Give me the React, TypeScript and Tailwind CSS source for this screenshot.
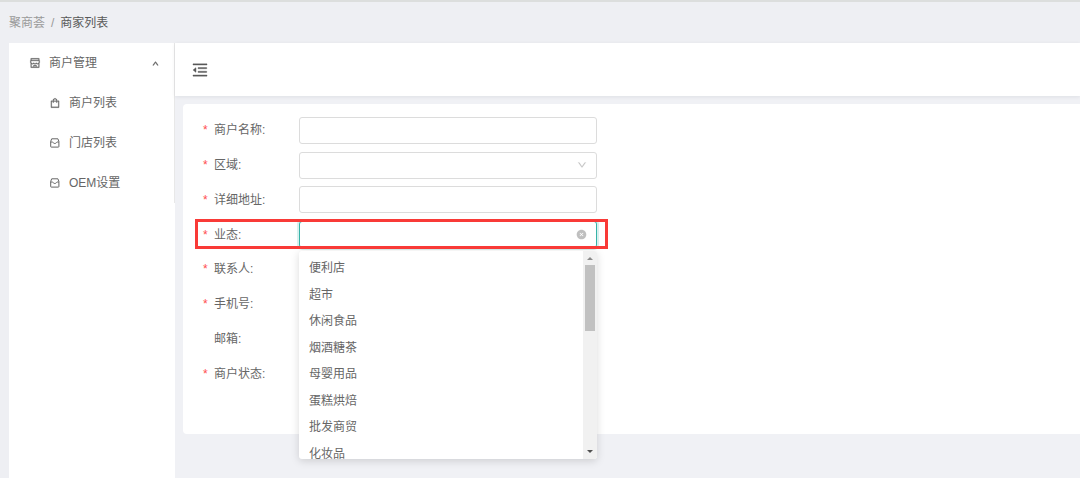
import { useState } from 'react'
import type { ReactNode } from 'react'
import {
  AiFillCloseCircle,
  AiOutlineDown,
  AiOutlineMenuFold,
  AiOutlineShop,
  AiOutlineShopping,
  AiOutlineUp,
} from 'react-icons/ai'

const CATEGORIES = ['便利店', '超市', '休闲食品', '烟酒糖茶', '母婴用品', '蛋糕烘焙', '批发商贸', '化妆品']

const FIELD =
  'h-[27px] w-full rounded-[3px] border border-[#dcdcdc] bg-white px-2 text-xs text-[#666] outline-none'

// Small tray with a notched shelf, used for the plain entries of the side menu.
function TrayIcon() {
  return (
    <svg viewBox="0 0 12 12" className="size-3" fill="none" stroke="currentColor" aria-hidden="true">
      <path d="M2.7 1.8h6.2l1 2.6v5.2a.5.5 0 0 1-.5.5H2.2a.5.5 0 0 1-.5-.5V4.4z" />
      <path d="M1.7 5h1.7c.6 0 .9 1.5 2.4 1.5S7.6 5 8.200 5h1.700" />
    </svg>
  )
}

function MenuLink({ icon, children }: { icon: ReactNode; children: ReactNode }) {
  return (
    <li>
      <a href="#" className="flex h-10 items-center gap-2 pl-10">
        {icon}
        {children}
      </a>
    </li>
  )
}

function Sidebar() {
  return (
    <aside className="w-[166px] shrink-0 bg-white">
      <nav className="border-r border-[#e8e8e8] text-xs text-[#666]">
        <button type="button" className="flex h-10 w-full items-center gap-2 pr-[15px] pl-5">
          <AiOutlineShop className="size-3 stroke-[20]" />
          商户管理
          <AiOutlineUp className="ml-auto size-[7px] stroke-[100]" />
        </button>
        <ul>
          <MenuLink icon={<AiOutlineShopping className="size-3 stroke-[20]" />}>商户列表</MenuLink>
          <MenuLink icon={<TrayIcon />}>门店列表</MenuLink>
          <MenuLink icon={<TrayIcon />}>OEM设置</MenuLink>
        </ul>
      </nav>
    </aside>
  )
}

interface RowProps {
  id: string
  label: string
  required?: boolean
  highlighted?: boolean
  children: ReactNode
}

function Row({ id, label, required = true, highlighted = false, children }: RowProps) {
  return (
    <div className="relative flex items-center">
      <label htmlFor={id} className="flex w-24 shrink-0 items-center">
        <span className="w-[11px] text-[#ff4d4f]">{required && '*'}</span>
        {label}:
      </label>
      <div className="relative w-[298px]">{children}</div>
      {highlighted && (
        <div className="pointer-events-none absolute -top-0.5 -left-2 z-20 h-[30px] w-[413px] border-[3px] border-[#f93a37]" />
      )}
    </div>
  )
}

function CategoryMenu() {
  return (
    <div className="absolute top-[30px] left-0 z-10 flex h-52 w-full overflow-hidden rounded-[3px] bg-white shadow-[0_2px_8px_rgba(0,0,0,0.15)]">
      <ul
        id="category-options"
        role="listbox"
        aria-label="业态"
        className="mt-1 grid h-[212px] flex-1 grid-rows-8 items-center leading-none"
      >
        {CATEGORIES.map((name) => (
          <li key={name} role="option" aria-selected={false} className="px-[10px]">
            {name}
          </li>
        ))}
      </ul>
      <div className="flex w-[14px] flex-col items-center bg-[#f1f1f1]" aria-hidden="true">
        <svg viewBox="0 0 14 14" className="size-[14px]" fill="#8b8b8b">
          <path d="M4 9h6L7 6z" />
        </svg>
        <div className="h-[66px] w-[10px] bg-[#c1c1c1]" />
        <svg viewBox="0 0 14 14" className="mt-auto size-[14px]" fill="#505050">
          <path d="M4 5h6L7 8z" />
        </svg>
      </div>
    </div>
  )
}

function MerchantForm() {
  const [category, setCategory] = useState('')

  return (
    <form className="grid h-[278px] grid-rows-8 items-center text-xs text-[#666]">
      <Row id="name" label="商户名称">
        <input id="name" className={FIELD} />
      </Row>
      <Row id="region" label="区域">
        <select id="region" className={`${FIELD} appearance-none`} />
        <AiOutlineDown className="pointer-events-none absolute top-2 right-[10px] size-[10px] stroke-[30] text-[#bfbfbf]" />
      </Row>
      <Row id="address" label="详细地址">
        <input id="address" className={FIELD} />
      </Row>
      <Row id="category" label="业态" highlighted>
        <input
          id="category"
          role="combobox"
          aria-expanded="true"
          aria-controls="category-options"
          value={category}
          onChange={(e) => setCategory(e.target.value)}
          className="h-[27px] w-full rounded-[3px] border border-[#36b3a8] bg-white px-2 text-xs outline-none shadow-[0_0_0_2px_rgba(54,179,168,0.2)]"
        />
        <button
          type="button"
          aria-label="清除"
          onClick={() => setCategory('')}
          className="absolute top-2 right-[10px] text-[#bfbfbf]"
        >
          <AiFillCloseCircle className="size-[11px]" />
        </button>
        <CategoryMenu />
      </Row>
      <Row id="contact" label="联系人">
        <input id="contact" className={FIELD} />
      </Row>
      <Row id="phone" label="手机号">
        <input id="phone" className={FIELD} />
      </Row>
      <Row id="email" label="邮箱" required={false}>
        <input id="email" className={FIELD} />
      </Row>
      <Row id="status" label="商户状态">
        <select id="status" className={`${FIELD} appearance-none`} />
      </Row>
    </form>
  )
}

export default function App() {
  return (
    <div className="flex min-h-screen flex-col border-t-2 border-[#dcdedd] bg-[#eeeff3] font-['Liberation_Sans','Noto_Sans_CJK_SC',sans-serif]">
      <nav className="flex h-[41px] items-center gap-[6px] px-[9px] text-xs" aria-label="breadcrumb">
        <a href="#" className="text-[#999]">
          聚商荟
        </a>
        <span className="text-[#999]">/</span>
        <span className="text-[#595959]">商家列表</span>
      </nav>
      <div className="flex flex-1 pl-[9px]">
        <Sidebar />
        <main className="flex-1 bg-[#f0f1f5]">
          <header className="flex h-[53px] items-center bg-white px-4 shadow-[0_1px_4px_rgba(0,21,41,0.08)]">
            <button type="button" aria-label="收起菜单" className="text-[#595959]">
              <AiOutlineMenuFold className="size-[18px] stroke-[20]" />
            </button>
          </header>
          <section className="mt-2 ml-2 h-[330px] rounded-l-[4px] bg-white pt-[9px] pl-5">
            <MerchantForm />
          </section>
        </main>
      </div>
    </div>
  )
}
